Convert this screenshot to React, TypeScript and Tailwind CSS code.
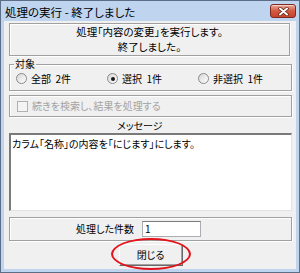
import React from 'react';

function CloseButton() {
  return (
    <div className="w-[26px] h-[14px] mt-[3px] rounded-[3px] border border-[#7c2a20] bg-gradient-to-b from-[#e9a998] via-[#d2583f] to-[#c8442b] flex items-center justify-center shadow-[inset_0_1px_0_rgba(255,255,255,0.5)]">
      <svg width="11" height="9" viewBox="0 0 11 9">
        <path d="M2 1.5 L9 7.5 M9 1.5 L2 7.5" stroke="#5a1d14" strokeWidth="3.4" strokeLinecap="round" />
        <path d="M2 1.5 L9 7.5 M9 1.5 L2 7.5" stroke="#ffffff" strokeWidth="2" strokeLinecap="round" />
      </svg>
    </div>
  );
}

function Radio({ label, checked }: { label: string; checked?: boolean }) {
  return (
    <div className="flex items-center gap-[4px]">
      <span className="w-[11px] h-[11px] rounded-full border border-[#8a8a8a] bg-gradient-to-br from-[#d6d6d6] to-[#ffffff] flex items-center justify-center">
        {checked && <span className="w-[4px] h-[4px] rounded-full bg-[#1a1a1a]" />}
      </span>
      <span className="whitespace-pre">{label}</span>
    </div>
  );
}

const etched = 'border border-[#a0a0a0] shadow-[1px_1px_0_#ffffff,inset_1px_1px_0_#ffffff]';

export default function App() {
  return (
    <div className="w-[300px] h-[273px] bg-[#bfd4ee] border border-[#5b6e86] flex flex-col text-black font-['Noto_Sans_CJK_JP',sans-serif] [font-feature-settings:'palt']">
      {/* Title bar */}
      <div className="h-[20px] flex items-start justify-between pl-[4px] pr-[3px]">
        <span className="text-[11.5px] leading-none pt-[6px]">処理の実行 - 終了しました</span>
        <CloseButton />
      </div>

      {/* Client area */}
      <div className="relative flex-1 mx-[3px] mb-[3px] bg-[#f0f0f0] px-[5px] pr-[4px] flex flex-col text-[10px] leading-none">
        {/* Status */}
        <div className={`mt-[2px] h-[33px] ${etched} flex flex-col items-center justify-center gap-[4px] mr-[2px] text-[10.5px]`}>
          <span>処理「内容の変更」を実行します。</span>
          <span>終了しました。</span>
        </div>

        {/* 対象 */}
        <div className={`relative mt-[8px] h-[27px] ${etched} grid grid-cols-[91px_91px_91px] items-center pl-[6px] pt-[2px]`}>
          <span className="absolute -top-[6px] left-[4px] px-[1px] bg-[#f0f0f0]">対象</span>
          <Radio label="全部  2件" />
          <Radio label="選択  1件" checked />
          <Radio label="非選択  1件" />
        </div>

        {/* 続きを検索 */}
        <div className={`mt-[4px] h-[22px] ${etched} flex items-center gap-[4px] pl-[7px]`}>
          <span className="w-[11px] h-[11px] border border-[#b1b1b1] bg-[#f4f4f4]" />
          <span className="text-[#a3a3a3]">続きを検索し、結果を処理する</span>
        </div>

        {/* メッセージ */}
        <div className="h-[16px] flex items-end pb-[2px] pl-[108px]">
          <span>メッセージ</span>
        </div>
        <div className="h-[78px] bg-white border-t-2 border-l-2 border-r border-b border-t-[#7a7a7a] border-l-[#7a7a7a] border-r-[#e3e3e3] border-b-[#e3e3e3] px-[1px] pt-[4px]">
          カラム「名称」の内容を「にじます」にします。
        </div>

        {/* 処理した件数 */}
        <div className={`mt-[6px] h-[24px] ${etched} flex items-center pl-[66px] gap-[8px]`}>
          <span>処理した件数</span>
          <div className="w-[59px] h-[16px] bg-white border border-[#abadb3] border-t-[#7a7a7a] flex items-center pl-[2px]">1</div>
        </div>

        {/* Button */}
        <div className="relative mt-[3px] flex justify-center">
          <button className="w-[64px] h-[22px] bg-[#f0f0f0] border border-t-[#ffffff] border-l-[#ffffff] border-r-[#696969] border-b-[#696969] shadow-[inset_-1px_-1px_0_#a0a0a0] text-[10px] flex items-center justify-center">
            閉じる
          </button>
          <div className="absolute left-[102px] -top-[6px] w-[80px] h-[32px] rounded-[50%] border-2 border-[#e3131b]" />
        </div>
      </div>
    </div>
  );
}
